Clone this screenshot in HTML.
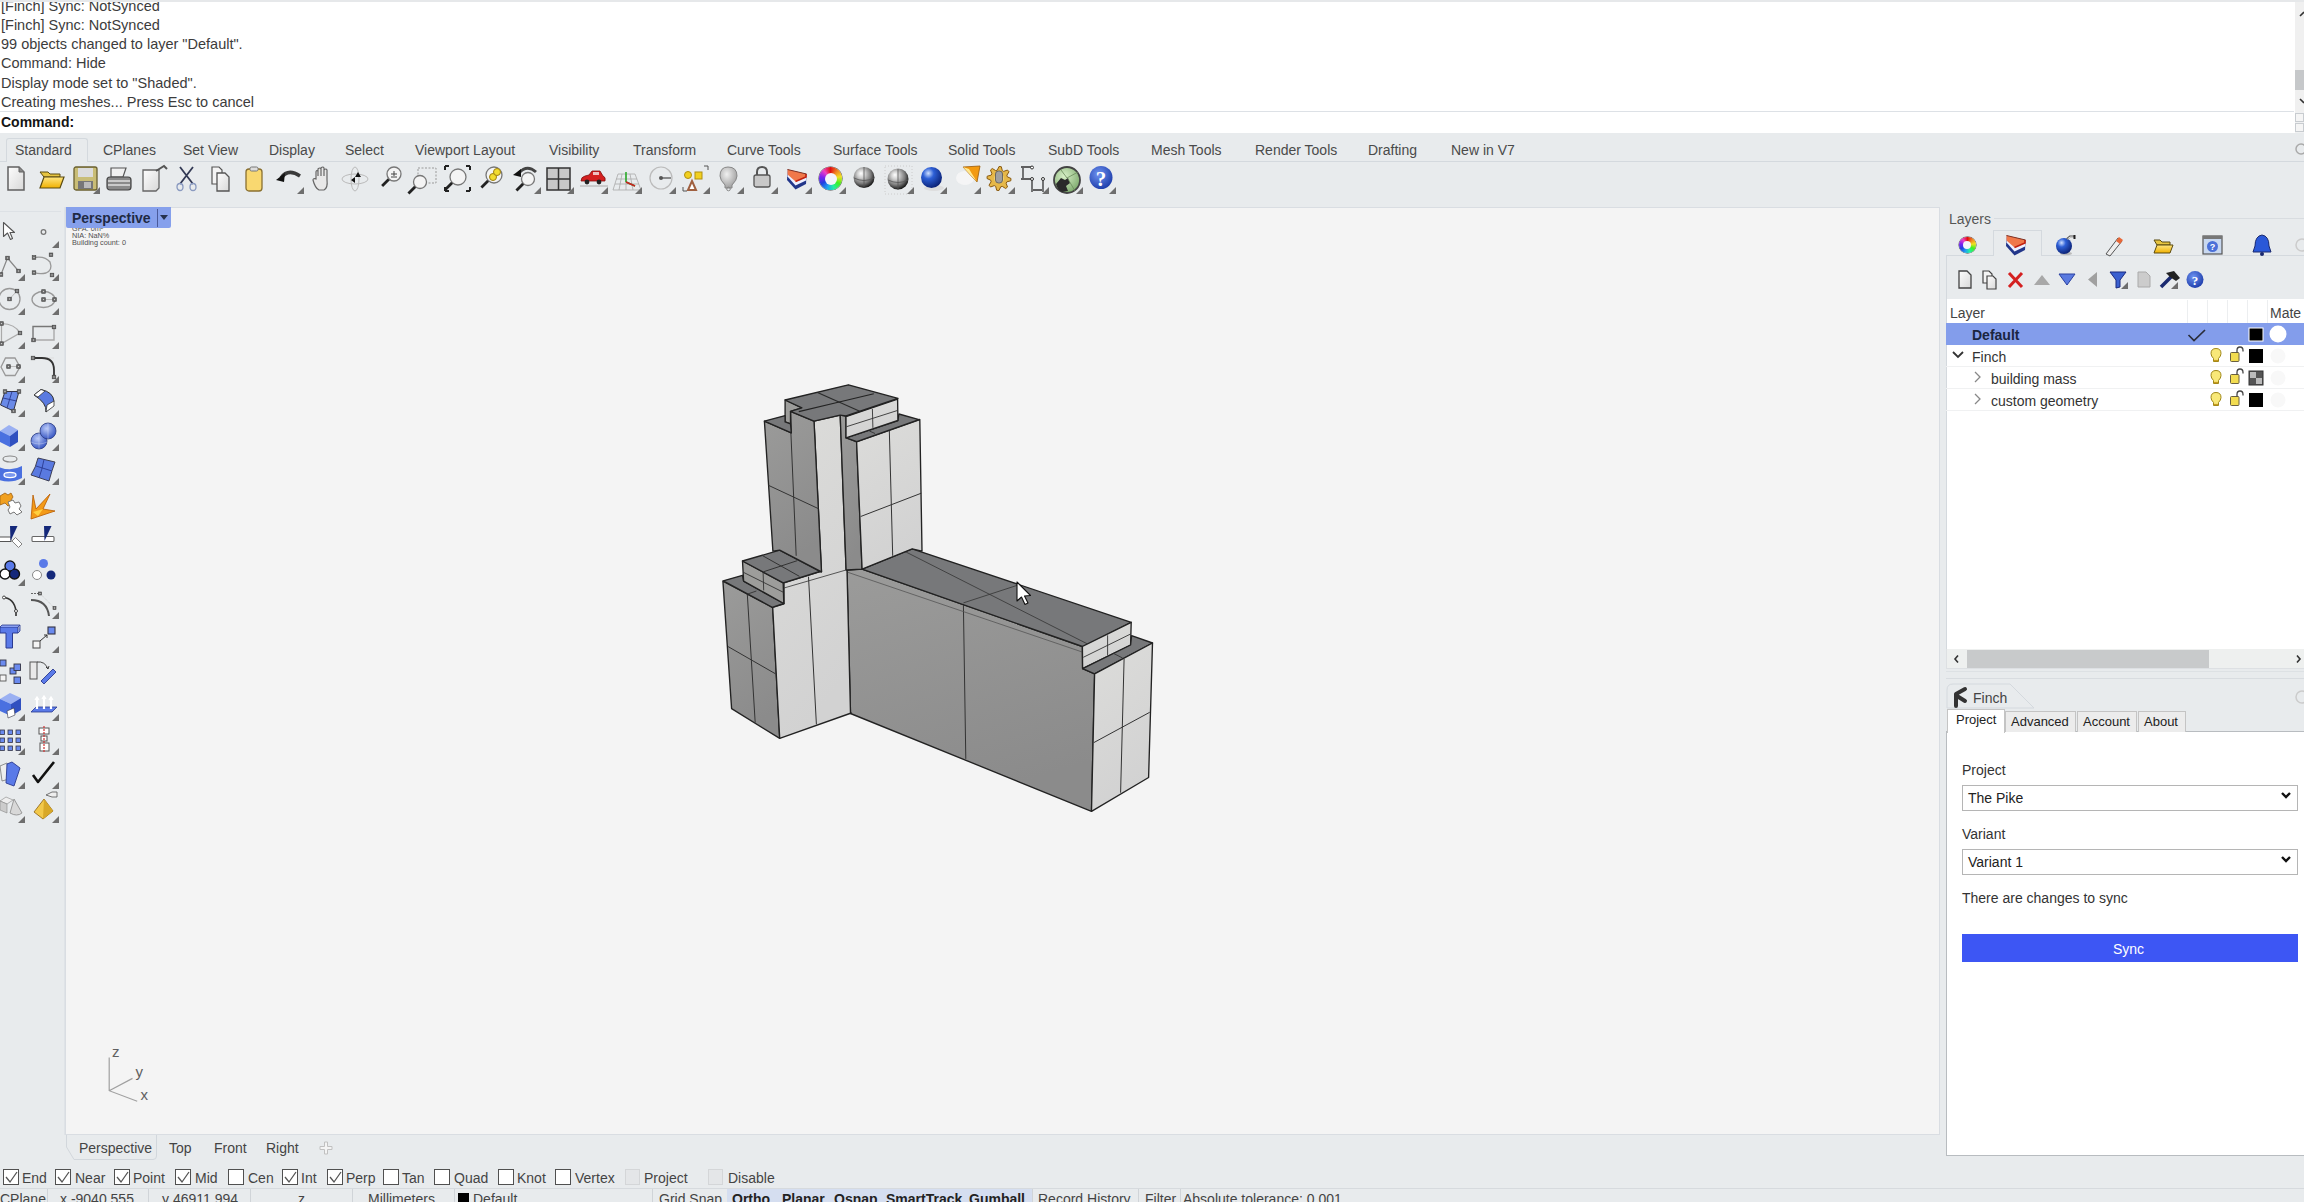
<!DOCTYPE html>
<html><head><meta charset="utf-8"><style>*{margin:0;padding:0;box-sizing:border-box}
html,body{width:2304px;height:1202px;overflow:hidden;background:#e8ebed;font-family:"Liberation Sans",sans-serif;position:relative}
.a{position:absolute}
.t{position:absolute;white-space:nowrap;line-height:16px}
svg{position:absolute;left:0;top:0}</style></head><body>
<div class="a" style="left:0;top:0;width:2304px;height:133px;background:#fff"></div>
<div class="a" style="left:0;top:0;width:2304px;height:2px;background:#e4e6e8"></div>
<div class="a" style="left:0;top:111px;width:2294px;height:1px;background:#dde1e6"></div>
<div class="a" style="left:2295px;top:2px;width:9px;height:110px;background:#f0f0f0"></div>
<div class="a" style="left:2295px;top:70px;width:9px;height:20px;background:#c6c8ca"></div>
<div class="a" style="left:2295px;top:112px;width:9px;height:21px;background:#f0f1f2"></div>
<div class="a" style="left:2295px;top:113px;width:9px;height:9px;border:1px solid #c8ccd0;background:#f5f5f5"></div>
<div class="a" style="left:2295px;top:123px;width:9px;height:9px;border:1px solid #c8ccd0;background:#f5f5f5"></div>
<div class="t" style="left:1px;top:-2px;font-size:14.5px;color:#3c3c3c;font-weight:normal;">[Finch] Sync: NotSynced</div>
<div class="t" style="left:1px;top:17px;font-size:14.5px;color:#3c3c3c;font-weight:normal;">[Finch] Sync: NotSynced</div>
<div class="t" style="left:1px;top:36px;font-size:14.5px;color:#3c3c3c;font-weight:normal;">99 objects changed to layer &quot;Default&quot;.</div>
<div class="t" style="left:1px;top:55px;font-size:14.5px;color:#3c3c3c;font-weight:normal;">Command: Hide</div>
<div class="t" style="left:1px;top:75px;font-size:14.5px;color:#3c3c3c;font-weight:normal;">Display mode set to &quot;Shaded&quot;.</div>
<div class="t" style="left:1px;top:94px;font-size:14.5px;color:#3c3c3c;font-weight:normal;">Creating meshes... Press Esc to cancel</div>
<div class="t" style="left:1px;top:114px;font-size:14px;color:#141414;font-weight:bold;">Command:</div>
<div class="a" style="left:0;top:0;width:2304px;height:2px;background:#e6e8ea"></div>
<div class="a" style="left:0;top:161px;width:2304px;height:1px;background:#d4d9de"></div>
<div class="a" style="left:6px;top:138px;width:82px;height:24px;background:#e8ebed;border:1px solid #d4d9de;border-bottom:none;border-radius:3px 3px 0 0"></div>
<div class="t" style="left:15px;top:142px;font-size:14px;color:#4a4a4a;font-weight:normal;">Standard</div>
<div class="t" style="left:103px;top:142px;font-size:14px;color:#4a4a4a;font-weight:normal;">CPlanes</div>
<div class="t" style="left:183px;top:142px;font-size:14px;color:#4a4a4a;font-weight:normal;">Set View</div>
<div class="t" style="left:269px;top:142px;font-size:14px;color:#4a4a4a;font-weight:normal;">Display</div>
<div class="t" style="left:345px;top:142px;font-size:14px;color:#4a4a4a;font-weight:normal;">Select</div>
<div class="t" style="left:415px;top:142px;font-size:14px;color:#4a4a4a;font-weight:normal;">Viewport Layout</div>
<div class="t" style="left:549px;top:142px;font-size:14px;color:#4a4a4a;font-weight:normal;">Visibility</div>
<div class="t" style="left:633px;top:142px;font-size:14px;color:#4a4a4a;font-weight:normal;">Transform</div>
<div class="t" style="left:727px;top:142px;font-size:14px;color:#4a4a4a;font-weight:normal;">Curve Tools</div>
<div class="t" style="left:833px;top:142px;font-size:14px;color:#4a4a4a;font-weight:normal;">Surface Tools</div>
<div class="t" style="left:948px;top:142px;font-size:14px;color:#4a4a4a;font-weight:normal;">Solid Tools</div>
<div class="t" style="left:1048px;top:142px;font-size:14px;color:#4a4a4a;font-weight:normal;">SubD Tools</div>
<div class="t" style="left:1151px;top:142px;font-size:14px;color:#4a4a4a;font-weight:normal;">Mesh Tools</div>
<div class="t" style="left:1255px;top:142px;font-size:14px;color:#4a4a4a;font-weight:normal;">Render Tools</div>
<div class="t" style="left:1368px;top:142px;font-size:14px;color:#4a4a4a;font-weight:normal;">Drafting</div>
<div class="t" style="left:1451px;top:142px;font-size:14px;color:#4a4a4a;font-weight:normal;">New in V7</div>
<div class="a" style="left:65px;top:207px;width:1875px;height:928px;background:#f4f4f4;border:1px solid #d9dde2"></div>
<div class="t" style="left:72px;top:224.5px;font-size:7.3px;line-height:8px;color:#505050">GFA: 0m²</div>
<div class="t" style="left:72px;top:231.5px;font-size:7.3px;line-height:8px;color:#505050">NIA: NaN%</div>
<div class="t" style="left:72px;top:238.5px;font-size:7.3px;line-height:8px;color:#505050">Building count: 0</div>
<div class="a" style="left:66px;top:207px;width:105px;height:21px;background:#86a0ec;border-radius:0 0 2px 2px"></div>
<div class="a" style="left:157px;top:209px;width:1px;height:18px;background:#4a5a9a"></div>
<div class="t" style="left:72px;top:210px;font-size:14px;color:#1f2a44;font-weight:bold;">Perspective</div>
<svg width="2304" height="1202" viewBox="0 0 2304 1202"><path d="M66.5 1135 V1147 L74 1159.5 H153 Q156.5 1159.5 156.5 1156 V1135" fill="#e8ebed" stroke="#d2d7dc" stroke-width="1"/></svg>
<div class="t" style="left:79px;top:1140px;font-size:14px;color:#444;font-weight:normal;">Perspective</div>
<div class="t" style="left:169px;top:1140px;font-size:14px;color:#444;font-weight:normal;">Top</div>
<div class="t" style="left:214px;top:1140px;font-size:14px;color:#444;font-weight:normal;">Front</div>
<div class="t" style="left:266px;top:1140px;font-size:14px;color:#444;font-weight:normal;">Right</div>
<div class="a" style="left:3px;top:1169px;width:16px;height:16px;border:1.5px solid #505050;background:#fff"></div>
<div class="t" style="left:22px;top:1170px;font-size:14px;color:#444;font-weight:normal;">End</div>
<div class="a" style="left:55px;top:1169px;width:16px;height:16px;border:1.5px solid #505050;background:#fff"></div>
<div class="t" style="left:75px;top:1170px;font-size:14px;color:#444;font-weight:normal;">Near</div>
<div class="a" style="left:114px;top:1169px;width:16px;height:16px;border:1.5px solid #505050;background:#fff"></div>
<div class="t" style="left:133px;top:1170px;font-size:14px;color:#444;font-weight:normal;">Point</div>
<div class="a" style="left:175px;top:1169px;width:16px;height:16px;border:1.5px solid #505050;background:#fff"></div>
<div class="t" style="left:195px;top:1170px;font-size:14px;color:#444;font-weight:normal;">Mid</div>
<div class="a" style="left:228px;top:1169px;width:16px;height:16px;border:1.5px solid #505050;background:#fff"></div>
<div class="t" style="left:248px;top:1170px;font-size:14px;color:#444;font-weight:normal;">Cen</div>
<div class="a" style="left:282px;top:1169px;width:16px;height:16px;border:1.5px solid #505050;background:#fff"></div>
<div class="t" style="left:301px;top:1170px;font-size:14px;color:#444;font-weight:normal;">Int</div>
<div class="a" style="left:327px;top:1169px;width:16px;height:16px;border:1.5px solid #505050;background:#fff"></div>
<div class="t" style="left:346px;top:1170px;font-size:14px;color:#444;font-weight:normal;">Perp</div>
<div class="a" style="left:383px;top:1169px;width:16px;height:16px;border:1.5px solid #505050;background:#fff"></div>
<div class="t" style="left:402px;top:1170px;font-size:14px;color:#444;font-weight:normal;">Tan</div>
<div class="a" style="left:434px;top:1169px;width:16px;height:16px;border:1.5px solid #505050;background:#fff"></div>
<div class="t" style="left:454px;top:1170px;font-size:14px;color:#444;font-weight:normal;">Quad</div>
<div class="a" style="left:498px;top:1169px;width:16px;height:16px;border:1.5px solid #505050;background:#fff"></div>
<div class="t" style="left:517px;top:1170px;font-size:14px;color:#444;font-weight:normal;">Knot</div>
<div class="a" style="left:555px;top:1169px;width:16px;height:16px;border:1.5px solid #505050;background:#fff"></div>
<div class="t" style="left:575px;top:1170px;font-size:14px;color:#444;font-weight:normal;">Vertex</div>
<div class="a" style="left:625px;top:1169px;width:15px;height:16px;border:1px solid #d4d6d8;background:#e4e6e8"></div>
<div class="t" style="left:644px;top:1170px;font-size:14px;color:#444;font-weight:normal;">Project</div>
<div class="a" style="left:708px;top:1169px;width:15px;height:16px;border:1px solid #d4d6d8;background:#e4e6e8"></div>
<div class="t" style="left:728px;top:1170px;font-size:14px;color:#444;font-weight:normal;">Disable</div>
<div class="a" style="left:0;top:1188px;width:2304px;height:1px;background:#d6dade"></div>
<div class="a" style="left:47px;top:1189px;width:1px;height:13px;background:#d0d4d8"></div>
<div class="a" style="left:148px;top:1189px;width:1px;height:13px;background:#d0d4d8"></div>
<div class="a" style="left:250px;top:1189px;width:1px;height:13px;background:#d0d4d8"></div>
<div class="a" style="left:352px;top:1189px;width:1px;height:13px;background:#d0d4d8"></div>
<div class="a" style="left:454px;top:1189px;width:1px;height:13px;background:#d0d4d8"></div>
<div class="a" style="left:652px;top:1189px;width:1px;height:13px;background:#d0d4d8"></div>
<div class="a" style="left:1032px;top:1189px;width:1px;height:13px;background:#d0d4d8"></div>
<div class="a" style="left:1138px;top:1189px;width:1px;height:13px;background:#d0d4d8"></div>
<div class="a" style="left:1180px;top:1189px;width:1px;height:13px;background:#d0d4d8"></div>
<div class="a" style="left:727px;top:1189px;width:305px;height:13px;background:#d5def0"></div>
<div class="a" style="left:458px;top:1193px;width:11px;height:11px;background:#000"></div>
<div class="t" style="left:0px;top:1191px;font-size:14px;color:#444;font-weight:normal;">CPlane</div>
<div class="t" style="left:60px;top:1191px;font-size:14px;color:#444;font-weight:normal;">x -9040.555</div>
<div class="t" style="left:162px;top:1191px;font-size:14px;color:#444;font-weight:normal;">y 46911.994</div>
<div class="t" style="left:298px;top:1191px;font-size:14px;color:#444;font-weight:normal;">z</div>
<div class="t" style="left:368px;top:1191px;font-size:14px;color:#444;font-weight:normal;">Millimeters</div>
<div class="t" style="left:473px;top:1191px;font-size:14px;color:#444;font-weight:normal;">Default</div>
<div class="t" style="left:659px;top:1191px;font-size:14px;color:#444;font-weight:normal;">Grid Snap</div>
<div class="t" style="left:732px;top:1191px;font-size:14px;color:#222;font-weight:bold;">Ortho</div>
<div class="t" style="left:782px;top:1191px;font-size:14px;color:#222;font-weight:bold;">Planar</div>
<div class="t" style="left:834px;top:1191px;font-size:14px;color:#222;font-weight:bold;">Osnap</div>
<div class="t" style="left:886px;top:1191px;font-size:14px;color:#222;font-weight:bold;">SmartTrack</div>
<div class="t" style="left:969px;top:1191px;font-size:14px;color:#222;font-weight:bold;">Gumball</div>
<div class="t" style="left:1038px;top:1191px;font-size:14px;color:#444;font-weight:normal;">Record History</div>
<div class="t" style="left:1145px;top:1191px;font-size:14px;color:#444;font-weight:normal;">Filter</div>
<div class="t" style="left:1183px;top:1191px;font-size:14px;color:#444;font-weight:normal;">Absolute tolerance: 0.001</div>
<div class="a" style="left:1941px;top:207px;width:5px;height:950px;background:#e8ebed"></div>
<div class="t" style="left:1949px;top:211px;font-size:14px;color:#555;font-weight:normal;">Layers</div>
<div class="a" style="left:1994px;top:218px;width:310px;height:1px;background:#d8dce0"></div>
<div class="a" style="left:1946px;top:255px;width:358px;height:1px;background:#d4d9de"></div>
<div class="a" style="left:1993px;top:230px;width:49px;height:26px;background:#e8ebed;border:1px solid #d4d9de;border-bottom:none"></div>
<div class="a" style="left:1946px;top:256px;width:358px;height:43px;background:#e8ebed;border-left:1px solid #d4d9de"></div>
<div class="a" style="left:1946px;top:299px;width:358px;height:350px;background:#fff;border-left:1px solid #d4d9de"></div>
<div class="a" style="left:2187px;top:300px;width:1px;height:23px;background:#eceef0"></div>
<div class="a" style="left:2207px;top:300px;width:1px;height:23px;background:#eceef0"></div>
<div class="a" style="left:2227px;top:300px;width:1px;height:23px;background:#eceef0"></div>
<div class="a" style="left:2247px;top:300px;width:1px;height:23px;background:#eceef0"></div>
<div class="a" style="left:2267px;top:300px;width:1px;height:23px;background:#eceef0"></div>
<div class="t" style="left:1950px;top:305px;font-size:14px;color:#444;font-weight:normal;">Layer</div>
<div class="t" style="left:2270px;top:305px;font-size:14px;color:#444;font-weight:normal;">Mate</div>
<div class="a" style="left:1946px;top:323px;width:358px;height:22px;background:#839deb"></div>
<div class="t" style="left:1972px;top:327px;font-size:14px;color:#1b2540;font-weight:bold;">Default</div>
<div class="a" style="left:1946px;top:366px;width:358px;height:1px;background:#f0f1f2"></div>
<div class="a" style="left:1946px;top:388px;width:358px;height:1px;background:#f0f1f2"></div>
<div class="a" style="left:1946px;top:410px;width:358px;height:1px;background:#f0f1f2"></div>
<div class="t" style="left:1972px;top:349px;font-size:14px;color:#333;font-weight:normal;">Finch</div>
<div class="t" style="left:1991px;top:371px;font-size:14px;color:#333;font-weight:normal;">building mass</div>
<div class="t" style="left:1991px;top:393px;font-size:14px;color:#333;font-weight:normal;">custom geometry</div>
<div class="a" style="left:1946px;top:649px;width:358px;height:20px;background:#eef0ef;border-left:1px solid #dde0e3;border-bottom:1px solid #dde0e3"></div>
<div class="a" style="left:1967px;top:649.5px;width:242px;height:18.5px;background:#c8cacb"></div>
<div class="a" style="left:1946px;top:671px;width:358px;height:1px;background:#dde1e4"></div>
<div class="a" style="left:1946px;top:678px;width:358px;height:1px;background:#d8dce0"></div>
<svg width="2304" height="1202" viewBox="0 0 2304 1202"><path d="M1947 708 L1947 690 Q1947 684 1953 684 L2010 684 L2034 708 Z" fill="#e8ebed" stroke="#d4d9de" stroke-width="1"/></svg>
<div class="t" style="left:1973px;top:690px;font-size:14px;color:#444;font-weight:normal;">Finch</div>
<div class="a" style="left:1946px;top:732px;width:358px;height:424px;background:#fff;border:1px solid #b8bcc0;border-right:none;border-top:none"></div>
<div class="a" style="left:1946px;top:731px;width:358px;height:1px;background:#b8bcc0"></div>
<div class="a" style="left:1947px;top:709px;width:58px;height:24px;background:#fff;border:1px solid #c4c4c4;border-bottom:none"></div>
<div class="a" style="left:2005px;top:711px;width:71px;height:21px;background:#ececec;border:1px solid #c4c4c4;border-bottom:none"></div>
<div class="t" style="left:2011px;top:714px;font-size:13px;color:#222;font-weight:normal;">Advanced</div>
<div class="a" style="left:2077px;top:711px;width:60px;height:21px;background:#ececec;border:1px solid #c4c4c4;border-bottom:none"></div>
<div class="t" style="left:2083px;top:714px;font-size:13px;color:#222;font-weight:normal;">Account</div>
<div class="a" style="left:2138px;top:711px;width:48px;height:21px;background:#ececec;border:1px solid #c4c4c4;border-bottom:none"></div>
<div class="t" style="left:2144px;top:714px;font-size:13px;color:#222;font-weight:normal;">About</div>
<div class="t" style="left:1956px;top:712px;font-size:13px;color:#222;font-weight:normal;">Project</div>
<div class="t" style="left:1962px;top:762px;font-size:14px;color:#333;font-weight:normal;">Project</div>
<div class="a" style="left:1962px;top:785px;width:336px;height:26px;border:1px solid #b5b5b5;background:#fff"></div>
<div class="t" style="left:1968px;top:790px;font-size:14px;color:#222;font-weight:normal;">The Pike</div>
<div class="t" style="left:1962px;top:826px;font-size:14px;color:#333;font-weight:normal;">Variant</div>
<div class="a" style="left:1962px;top:849px;width:336px;height:26px;border:1px solid #b5b5b5;background:#fff"></div>
<div class="t" style="left:1968px;top:854px;font-size:14px;color:#222;font-weight:normal;">Variant 1</div>
<div class="t" style="left:1962px;top:890px;font-size:14px;color:#333;font-weight:normal;">There are changes to sync</div>
<div class="a" style="left:1962px;top:934px;width:336px;height:28px;background:#3d56f4"></div>
<div class="t" style="left:2113px;top:941px;font-size:14px;color:#fff;font-weight:normal;">Sync</div>
<div class="a" style="left:64px;top:207px;width:1px;height:928px;background:#dfe3e7"></div>
<div class="a" style="left:0;top:211px;width:61px;height:1px;background:#dde1e5"></div>
<div class="a" style="left:1941px;top:1157px;width:363px;height:1px;background:#e8ebed"></div>
<div class="a" style="left:819px;top:167px;width:23px;height:23px;border-radius:50%;background:conic-gradient(#e01010,#f08020,#f0e020,#40f020,#20f0a0,#20a0f0,#2040e0,#8020f0,#f040c0,#e01010);box-shadow:0 0 0 0.5px #444"></div>
<div class="a" style="left:824.5px;top:172.5px;width:12px;height:12px;border-radius:50%;background:#f4f4fa"></div>
<div class="t" style="left:112px;top:1044px;font-size:15px;color:#606060">z</div>
<div class="t" style="left:135.5px;top:1064px;font-size:15px;color:#606060">y</div>
<div class="t" style="left:140.5px;top:1087px;font-size:15px;color:#606060">x</div>
<div class="a" style="left:1959px;top:236.5px;width:16.6px;height:16.6px;border-radius:50%;background:conic-gradient(#e01010,#f08020,#f0e020,#40f020,#20f0a0,#20a0f0,#2040e0,#8020f0,#f040c0,#e01010);box-shadow:0 0 0 0.5px #444"></div>
<div class="a" style="left:1963.3px;top:240.8px;width:8px;height:8px;border-radius:50%;background:#f4f4fa"></div>
<svg width="2304" height="1202" viewBox="0 0 2304 1202">
<path d="M2300 16 L2304 12 M2300 99 L2304 103" fill="none" stroke="#333" stroke-width="1.6"/>
<circle cx="2301" cy="149" r="5" fill="none" stroke="#aaa" stroke-width="1.5"/>
<path d="M160 215 L168 215 L164 220 Z" fill="#26324f"/>
<path d="M324.5 1142 H327.5 V1146.5 H332 V1149.5 H327.5 V1154 H324.5 V1149.5 H320 V1146.5 H324.5 Z" fill="#f4f4f4" stroke="#c0c0c0" stroke-width="1"/>
<path d="M6 1177 L10 1182 L17 1172" fill="none" stroke="#555" stroke-width="1.3"/>
<path d="M58 1177 L62 1182 L69 1172" fill="none" stroke="#555" stroke-width="1.3"/>
<path d="M117 1177 L121 1182 L128 1172" fill="none" stroke="#555" stroke-width="1.3"/>
<path d="M178 1177 L182 1182 L189 1172" fill="none" stroke="#555" stroke-width="1.3"/>
<path d="M285 1177 L289 1182 L296 1172" fill="none" stroke="#555" stroke-width="1.3"/>
<path d="M330 1177 L334 1182 L341 1172" fill="none" stroke="#555" stroke-width="1.3"/>
<path d="M1958 655.5 L1955 659 L1958 662.5 M2297 655.5 L2300 659 L2297 662.5" fill="none" stroke="#333" stroke-width="1.6"/>
<path d="M2282 793 L2286 797 L2290 793" fill="none" stroke="#111" stroke-width="2.4"/>
<path d="M2282 857 L2286 861 L2290 857" fill="none" stroke="#111" stroke-width="2.4"/>
<defs>
<linearGradient id="gpaper" x1="0" y1="0" x2="1" y2="1"><stop offset="0" stop-color="#fdfdfd"/><stop offset="1" stop-color="#d8d8d8"/></linearGradient>
<linearGradient id="gyel" x1="0" y1="0" x2="0" y2="1"><stop offset="0" stop-color="#ffe680"/><stop offset="1" stop-color="#f0b000"/></linearGradient>
<radialGradient id="gsph" cx="0.42" cy="0.38" r="0.62" fx="0.35" fy="0.3"><stop offset="0" stop-color="#ffffff"/><stop offset="0.3" stop-color="#d0d0d0"/><stop offset="0.7" stop-color="#7a7a7a"/><stop offset="1" stop-color="#1a1a1a"/></radialGradient>
<radialGradient id="gblue" cx="0.35" cy="0.3" r="0.75"><stop offset="0" stop-color="#cfe0ff"/><stop offset="0.35" stop-color="#2d5fd6"/><stop offset="1" stop-color="#0a1f70"/></radialGradient>
<radialGradient id="ghelp" cx="0.4" cy="0.35" r="0.7"><stop offset="0" stop-color="#6f94f2"/><stop offset="1" stop-color="#1b3aa8"/></radialGradient>
<radialGradient id="gglobe" cx="0.4" cy="0.35" r="0.7"><stop offset="0" stop-color="#d8f0c8"/><stop offset="1" stop-color="#7aa86a"/></radialGradient>
<radialGradient id="gbulb" cx="0.4" cy="0.35" r="0.7"><stop offset="0" stop-color="#f0f0f0"/><stop offset="1" stop-color="#9a9a9a"/></radialGradient>
<linearGradient id="gblu2" x1="0" y1="0" x2="1" y2="1"><stop offset="0" stop-color="#a8bdf5"/><stop offset="1" stop-color="#3a5ccc"/></linearGradient>
<linearGradient id="gface" x1="0" y1="0" x2="0.3" y2="1"><stop offset="0" stop-color="#9b9b9a"/><stop offset="1" stop-color="#8b8b8b"/></linearGradient>
<linearGradient id="glight" x1="0" y1="0" x2="0.3" y2="1"><stop offset="0" stop-color="#dcdcda"/><stop offset="1" stop-color="#d2d2d2"/></linearGradient>
</defs>
<g transform="translate(7,166)"><path d="M1 1 H12 L17 6 V24 H1 Z" fill="url(#gpaper)" stroke="#606060" stroke-width="1.5"/><path d="M12 1 V6 H17" fill="#888" stroke="#606060"/></g>
<g transform="translate(39,166)"><path d="M1 6 H9 L11 8 H21 V11 H5 Z" fill="#e6c440" stroke="#5a4a10" stroke-width="1"/><path d="M1 22 L5 11 H25 L21 22 Z" fill="url(#gyel)" stroke="#5a4a10" stroke-width="1.2"/></g>
<g transform="translate(73,166)"><rect x="1" y="1" width="23" height="23" rx="2" fill="#c9bd76" stroke="#6a6030" stroke-width="1.3"/><rect x="5" y="2" width="15" height="9" fill="#dcdcdc"/><rect x="5" y="15" width="15" height="8" fill="#777" /><rect x="11" y="16" width="7" height="6" fill="#bbb"/></g>
<path d="M100 194 L100 187 L93 194 Z" fill="#6e6e6e"/>
<g transform="translate(106,166)"><path d="M5 2 H20 L17 11 H5 Z" fill="#f0f0f0" stroke="#555" stroke-width="1.2"/><rect x="1" y="11" width="24" height="13" rx="3" fill="#8a8a8a" stroke="#444" stroke-width="1.2"/><path d="M2 15 H24 M2 19 H24" stroke="#e0e0e0" stroke-width="1.5"/></g>
<g transform="translate(142,166)"><path d="M1 4 H17 V22 L14 25 H1 Z" fill="url(#gpaper)" stroke="#666" stroke-width="1.3"/><path d="M14 5 L22 0 L25 3" fill="none" stroke="#555" stroke-width="2"/></g>
<g transform="translate(177,166)"><path d="M3 1 L16 18 M16 1 L3 18" stroke="#333a55" stroke-width="1.8"/><ellipse cx="3" cy="21" rx="3" ry="3.5" fill="none" stroke="#8a9ac0" stroke-width="1.3"/><ellipse cx="16" cy="21" rx="3" ry="3.5" fill="none" stroke="#8a9ac0" stroke-width="1.3"/></g>
<g transform="translate(211,166)"><path d="M1 1 H8 L11 4 V18 H1 Z" fill="#f4f4f4" stroke="#555" stroke-width="1.2"/><path d="M6 7 H14 L18 11 V25 H6 Z" fill="url(#gpaper)" stroke="#555" stroke-width="1.3"/></g>
<g transform="translate(245,166)"><rect x="1" y="3" width="16" height="22" rx="3" fill="#f9d870" stroke="#8a7030" stroke-width="1.3"/><rect x="5" y="1" width="8" height="4" rx="1.5" fill="#ddd" stroke="#777"/></g>
<g transform="translate(276,166)"><path d="M5 12 Q12 2 24 10" fill="none" stroke="#3a3a3a" stroke-width="3.5"/><path d="M0 14 L9 7 L8 16 Z" fill="#111"/></g>
<path d="M304 194 L304 187 L297 194 Z" fill="#6e6e6e"/>
<g transform="translate(312,166)"><path d="M4 12 V6 Q4 4 6 5 V10 V3 Q8 1 9 3 V10 V2 Q11 0 12 2 V10 V4 Q14 2 15 4 V14 Q16 22 12 24 H7 Q3 22 1 14 Q1 12 4 13 Z" fill="#e8e8e8" stroke="#666" stroke-width="1.2"/></g>
<g transform="translate(342,166)"><ellipse cx="13" cy="13" rx="13" ry="5" fill="none" stroke="#bbb" stroke-width="1"/><ellipse cx="13" cy="13" rx="4" ry="12" fill="none" stroke="#bbb" stroke-width="1"/><path d="M16 6 L19 11 H13 Z M9 14 L13 11 V17 Z" fill="#111"/></g>
<g transform="translate(379,166)"><line x1="10.100000000000001" y1="12.899999999999999" x2="3.1000000000000014" y2="19.9" stroke="#222" stroke-width="2.8"/><circle cx="15" cy="8" r="7" fill="#f4f4f4" stroke="#777" stroke-width="1.3"/><path d="M12 8 H18 M15 5 V10 M12 11 H18" stroke="#444" stroke-width="1"/></g>
<g transform="translate(410,166)"><rect x="8" y="2" width="18" height="15" fill="none" stroke="#999" stroke-dasharray="2 1.5"/><line x1="5.45" y1="20.55" x2="-1.5499999999999998" y2="27.55" stroke="#222" stroke-width="2.8"/><circle cx="10" cy="16" r="6.5" fill="#f4f4f4" stroke="#777" stroke-width="1.3"/></g>
<g transform="translate(445,166)"><line x1="7.4" y1="16.6" x2="0.40000000000000036" y2="23.6" stroke="#222" stroke-width="2.8"/><circle cx="13" cy="11" r="8" fill="#f4f4f4" stroke="#777" stroke-width="1.3"/><path d="M0 0 h4 M0 0 v4 M25 0 h-4 M25 0 v4 M0 25 h4 M0 25 v-4 M25 25 h-4 M25 25 v-4" stroke="#222" stroke-width="2"/></g>
<g transform="translate(480,166)"><line x1="8.4" y1="14.6" x2="1.4000000000000004" y2="21.6" stroke="#222" stroke-width="2.8"/><circle cx="14" cy="9" r="8" fill="#f4f4f4" stroke="#777" stroke-width="1.3"/><circle cx="13" cy="11" r="3.5" fill="#f2dc30" stroke="#a08010"/><circle cx="17" cy="6" r="3.5" fill="#f2dc30" stroke="#a08010"/></g>
<g transform="translate(513,166)"><line x1="10.45" y1="17.55" x2="3.4499999999999993" y2="24.55" stroke="#222" stroke-width="2.8"/><circle cx="15" cy="13" r="6.5" fill="#f4f4f4" stroke="#777" stroke-width="1.3"/><path d="M6 7 Q14 -2 23 6" fill="none" stroke="#444" stroke-width="3"/><path d="M0 9 L8 3 L8 11 Z" fill="#111"/></g>
<path d="M541 194 L541 187 L534 194 Z" fill="#6e6e6e"/>
<g transform="translate(546,166)"><rect x="1" y="2" width="23" height="22" fill="#c8c8c8" stroke="#333" stroke-width="1.5"/><path d="M12.5 2 V24 M1 13 H24" stroke="#333" stroke-width="1.5"/></g>
<path d="M574 194 L574 187 L567 194 Z" fill="#6e6e6e"/>
<g transform="translate(580,166)"><path d="M1 15 Q1 11 5 10 L9 9 L12 5 H20 L23 10 Q26 11 25 15 Z" fill="#d42020" stroke="#801010" stroke-width="0.8"/><rect x="13" y="6" width="6" height="3" fill="#f0c0c0"/><circle cx="7" cy="16" r="2.4" fill="#222"/><circle cx="19" cy="16" r="2.4" fill="#222"/><path d="M0 20 H28" stroke="#aaa"/></g>
<path d="M608 194 L608 187 L601 194 Z" fill="#6e6e6e"/>
<g transform="translate(613,166)"><path d="M5 8 L22 8 L28 24 L0 24 Z M9 8 L6 24 M13 8 L13 24 M17 8 L20 24 M3 13 H24 M2 18 H26" fill="none" stroke="#aaa" stroke-width="0.8"/><path d="M13 16 V6 M13 16 L22 20" stroke="#2a2" stroke-width="1.5"/><path d="M13 16 L22 20" stroke="#c22" stroke-width="1.5"/></g>
<path d="M642 194 L642 187 L635 194 Z" fill="#6e6e6e"/>
<g transform="translate(649,166)"><circle cx="12" cy="12" r="11" fill="none" stroke="#bbb" stroke-width="1.2"/><circle cx="12" cy="12" r="2" fill="#555"/><path d="M12 12 H22" stroke="#555" stroke-width="1.3"/></g>
<path d="M676 194 L676 187 L669 194 Z" fill="#6e6e6e"/>
<g transform="translate(683,166)"><circle cx="5" cy="9" r="3.5" fill="#f2d020" stroke="#b09010"/><rect x="12" y="6" width="7" height="7" fill="#f2d020" stroke="#b09010"/><path d="M9 15 L13 24 L5 24 Z" fill="#fff" stroke="#a06040" stroke-width="2"/><path d="M21 0 h4 v4 M0 21 v4 h4" fill="none" stroke="#555"/></g>
<path d="M710 194 L710 187 L703 194 Z" fill="#6e6e6e"/>
<g transform="translate(719,166)"><path d="M9 1 Q18 1 18 10 Q18 14 13 19 V22 H6 V19 Q1 14 1 10 Q1 1 9 1 Z" fill="url(#gbulb)" stroke="#888" stroke-width="1"/><circle cx="9.5" cy="23" r="1.8" fill="none" stroke="#888"/></g>
<path d="M744 194 L744 187 L737 194 Z" fill="#6e6e6e"/>
<g transform="translate(753,166)"><path d="M4 9 V6 Q4 1 9 1 Q14 1 14 6 V9" fill="none" stroke="#555" stroke-width="2"/><rect x="1" y="9" width="16" height="12" rx="2" fill="#c8c8c8" stroke="#555" stroke-width="1.3"/></g>
<path d="M778 194 L778 187 L771 194 Z" fill="#6e6e6e"/>
<g transform="translate(787,166)"><path d="M0.5 3.5 L19.5 8 L19 18 L8.5 23.5 L0 14 Z" fill="#22368a"/><path d="M0.5 3.5 L19.5 8 L19 14.5 L8.5 19.5 L0.5 10.5 Z" fill="#eef0ff"/><path d="M0.5 3.5 L19.5 8 L19 11 L8.5 15.5 L0.5 8.5 Z" fill="#f0784a"/><path d="M8.5 15.5 L19 11 L19 8" fill="none" stroke="#c02010" stroke-width="1.6"/><path d="M0.5 3.5 L19.5 8" stroke="#803020" stroke-width="1"/></g>
<path d="M812 194 L812 187 L805 194 Z" fill="#6e6e6e"/>
<defs><linearGradient id="gcw" x1="0" y1="0" x2="1" y2="1"><stop offset="0" stop-color="#d020d0"/><stop offset="0.25" stop-color="#ff3020"/><stop offset="0.5" stop-color="#f0e020"/><stop offset="0.75" stop-color="#20e060"/><stop offset="1" stop-color="#2060ff"/></linearGradient></defs>
<path d="M846 194 L846 187 L839 194 Z" fill="#6e6e6e"/>
<g transform="translate(853,166)"><circle cx="11" cy="11.5" r="10.5" fill="url(#gsph)"/><path d="M11 1 V22 M1 12 Q11 17 21 12" fill="none" stroke="#555" stroke-width="0.8"/></g>
<g transform="translate(885,166)"><rect x="0" y="0" width="27" height="28" fill="none" stroke="#ccc" stroke-dasharray="1 2"/><circle cx="13" cy="13" r="10.5" fill="url(#gsph)"/><path d="M13 3 V24 M3 14 Q13 19 23 14" fill="none" stroke="#555" stroke-width="0.8"/></g>
<path d="M914 194 L914 187 L907 194 Z" fill="#6e6e6e"/>
<g transform="translate(920,166)"><ellipse cx="14" cy="22" rx="10" ry="3" fill="#ddd"/><circle cx="11.5" cy="11.5" r="10.5" fill="url(#gblue)"/></g>
<path d="M947 194 L947 187 L940 194 Z" fill="#6e6e6e"/>
<g transform="translate(955,166)"><ellipse cx="10" cy="12" rx="9" ry="7" fill="#f8f8f8" opacity="0.8"/><path d="M8 1 L25 0 L22 16 Z" fill="#f39a10" stroke="#9a5a08" stroke-width="0.8"/><path d="M8 1 L14 3 L22 16" fill="#ffe890"/></g>
<path d="M981 194 L981 187 L974 194 Z" fill="#6e6e6e"/>
<g transform="translate(986,166)"><path d="M25.0 12.5 L24.8 14.8 L20.9 15.8 L20.1 17.2 L21.5 21.0 L19.7 22.5 L16.3 20.4 L14.7 20.8 L13.0 24.5 L10.7 24.3 L9.7 20.4 L8.3 19.6 L4.5 21.0 L3.0 19.2 L5.1 15.8 L4.7 14.2 L1.0 12.5 L1.2 10.2 L5.1 9.2 L5.9 7.8 L4.5 4.0 L6.3 2.5 L9.7 4.6 L11.3 4.2 L13.0 0.5 L15.3 0.7 L16.3 4.6 L17.7 5.4 L21.5 4.0 L23.0 5.8 L20.9 9.2 L21.3 10.8 Z" fill="#e6b848" stroke="#8a5a10" stroke-width="1"/><circle cx="13" cy="12.5" r="5" fill="#f0d070"/><rect x="9.5" y="5" width="7" height="12" rx="3" fill="#a0a0a0" stroke="#555" stroke-width="0.8"/></g>
<path d="M1015 194 L1015 187 L1008 194 Z" fill="#6e6e6e"/>
<g transform="translate(1020,166)"><path d="M1 1 H12 M1 13 H12 M3 2 V12 M12 13 V26 M23 13 V26 M13 24 H22" fill="none" stroke="#333" stroke-width="1.3"/><circle cx="12" cy="1.5" r="1.5" fill="#fff" stroke="#333"/><circle cx="12" cy="13" r="1.5" fill="#fff" stroke="#333"/><circle cx="23" cy="13" r="1.5" fill="#fff" stroke="#333"/></g>
<path d="M1049 194 L1049 187 L1042 194 Z" fill="#6e6e6e"/>
<g transform="translate(1053,166)"><circle cx="14" cy="14" r="13" fill="url(#gglobe)" stroke="#444" stroke-width="1.8"/><path d="M3 18 L8 12 L12 14 L15 12 L17 17 L13 20 L15 25 L9 26 Q4 23 3 18 Z" fill="#2a2a2a"/><path d="M14 12 L25 6 M15 13 L22 25 M8 4 L14 12" stroke="#6a8a5a" stroke-width="0.8"/></g>
<path d="M1083 194 L1083 187 L1076 194 Z" fill="#6e6e6e"/>
<g transform="translate(1089,166)"><circle cx="12" cy="11.5" r="11.5" fill="url(#ghelp)"/><text x="12" y="19.5" font-family="Liberation Serif" font-weight="bold" font-size="21" fill="#fff" text-anchor="middle">?</text></g>
<path d="M1116 194 L1116 187 L1109 194 Z" fill="#6e6e6e"/>
<path d="M3.5 222.5 V236.5 L7.5 233 L10.5 239.5 L12.5 238.5 L10 232.5 L14.5 232.5 Z" fill="#fff" stroke="#555" stroke-width="1.1" stroke-linejoin="round"/>
<circle cx="43.5" cy="232" r="2.3" fill="none" stroke="#777" stroke-width="1.3"/>
<path d="M59 248 L59 241 L52 248 Z" fill="#6e6e6e"/>
<path d="M1 274.5 L7.5 258 L18.5 271" fill="none" stroke="#888" stroke-width="1.2"/><rect x="-0.8" y="272.7" width="3.6" height="3.6" fill="#666" stroke="#444" stroke-width="0.6"/><rect x="0.4" y="273.9" width="1.2" height="1.2" fill="#ccc"/><rect x="5.7" y="256.2" width="3.6" height="3.6" fill="#666" stroke="#444" stroke-width="0.6"/><rect x="6.9" y="257.4" width="1.2" height="1.2" fill="#ccc"/><rect x="16.7" y="269.2" width="3.6" height="3.6" fill="#666" stroke="#444" stroke-width="0.6"/><rect x="17.9" y="270.4" width="1.2" height="1.2" fill="#ccc"/>
<path d="M25 281 L25 274 L18 281 Z" fill="#6e6e6e"/>
<path d="M34 257.5 Q45 255.5 50 262 Q53 270 46 273 Q40 274.5 34 272.5" fill="none" stroke="#999" stroke-width="1.3"/><rect x="32.2" y="255.7" width="3.6" height="3.6" fill="#666" stroke="#444" stroke-width="0.6"/><rect x="33.4" y="256.9" width="1.2" height="1.2" fill="#ccc"/><rect x="49.2" y="253.0" width="3.6" height="3.6" fill="#666" stroke="#444" stroke-width="0.6"/><rect x="50.4" y="254.20000000000002" width="1.2" height="1.2" fill="#ccc"/><rect x="32.2" y="270.8" width="3.6" height="3.6" fill="#666" stroke="#444" stroke-width="0.6"/><rect x="33.4" y="272.0" width="1.2" height="1.2" fill="#ccc"/><rect x="50.2" y="273.2" width="3.6" height="3.6" fill="#666" stroke="#444" stroke-width="0.6"/><rect x="51.4" y="274.4" width="1.2" height="1.2" fill="#ccc"/>
<path d="M59 281 L59 274 L52 281 Z" fill="#6e6e6e"/>
<circle cx="9.5" cy="299" r="10.5" fill="none" stroke="#999" stroke-width="1.3"/><path d="M9.5 299 L17 291" stroke="#bbb"/><rect x="7.7" y="297.2" width="3.6" height="3.6" fill="#666" stroke="#444" stroke-width="0.6"/><rect x="8.9" y="298.4" width="1.2" height="1.2" fill="#ccc"/><rect x="15.2" y="289.2" width="3.6" height="3.6" fill="#666" stroke="#444" stroke-width="0.6"/><rect x="16.4" y="290.4" width="1.2" height="1.2" fill="#ccc"/>
<path d="M25 315 L25 308 L18 315 Z" fill="#6e6e6e"/>
<ellipse cx="43.5" cy="299.5" rx="11.5" ry="8" fill="none" stroke="#999" stroke-width="1.3"/><path d="M43.5 299.5 H54.5" stroke="#bbb"/><rect x="41.7" y="289.7" width="3.6" height="3.6" fill="#666" stroke="#444" stroke-width="0.6"/><rect x="42.9" y="290.9" width="1.2" height="1.2" fill="#ccc"/><rect x="41.7" y="297.7" width="3.6" height="3.6" fill="#666" stroke="#444" stroke-width="0.6"/><rect x="42.9" y="298.9" width="1.2" height="1.2" fill="#ccc"/><rect x="52.7" y="297.7" width="3.6" height="3.6" fill="#666" stroke="#444" stroke-width="0.6"/><rect x="53.9" y="298.9" width="1.2" height="1.2" fill="#ccc"/>
<path d="M59 315 L59 308 L52 315 Z" fill="#6e6e6e"/>
<path d="M1.5 323.5 Q15 324 20 333 L1.5 343.6 Z" fill="none" stroke="#aaa" stroke-width="1.2"/><rect x="-0.30000000000000004" y="321.7" width="3.6" height="3.6" fill="#666" stroke="#444" stroke-width="0.6"/><rect x="0.9" y="322.9" width="1.2" height="1.2" fill="#ccc"/><rect x="18.2" y="331.2" width="3.6" height="3.6" fill="#666" stroke="#444" stroke-width="0.6"/><rect x="19.4" y="332.4" width="1.2" height="1.2" fill="#ccc"/><rect x="-0.30000000000000004" y="341.8" width="3.6" height="3.6" fill="#666" stroke="#444" stroke-width="0.6"/><rect x="0.9" y="343.0" width="1.2" height="1.2" fill="#ccc"/>
<path d="M25 349 L25 342 L18 349 Z" fill="#6e6e6e"/>
<path d="M33 340 V326.5 H54" fill="none" stroke="#777" stroke-width="1.4"/><path d="M54 326.5 V340 H33" fill="none" stroke="#aaa" stroke-width="1.4"/><rect x="52.2" y="325.2" width="3.6" height="3.6" fill="#666" stroke="#444" stroke-width="0.6"/><rect x="53.4" y="326.4" width="1.2" height="1.2" fill="#ccc"/><rect x="31.7" y="338.2" width="3.6" height="3.6" fill="#666" stroke="#444" stroke-width="0.6"/><rect x="32.9" y="339.4" width="1.2" height="1.2" fill="#ccc"/>
<path d="M59 349 L59 342 L52 349 Z" fill="#6e6e6e"/>
<path d="M1 367 L5.5 358 H15 L20 367 L15 375.5 H5.5 Z" fill="none" stroke="#999" stroke-width="1.3"/><path d="M8.5 366.5 H18.5" stroke="#bbb"/><rect x="6.7" y="364.7" width="3.6" height="3.6" fill="#666" stroke="#444" stroke-width="0.6"/><rect x="7.9" y="365.9" width="1.2" height="1.2" fill="#ccc"/><rect x="16.7" y="364.7" width="3.6" height="3.6" fill="#666" stroke="#444" stroke-width="0.6"/><rect x="17.9" y="365.9" width="1.2" height="1.2" fill="#ccc"/>
<path d="M25 383 L25 376 L18 383 Z" fill="#6e6e6e"/>
<path d="M54 358 H44" fill="none" stroke="#ddd" stroke-width="1"/><path d="M33 358 H42 Q54 358 54 370 V377" fill="none" stroke="#333" stroke-width="1.8"/><rect x="31.2" y="356.2" width="3.6" height="3.6" fill="#666" stroke="#444" stroke-width="0.6"/><rect x="32.4" y="357.4" width="1.2" height="1.2" fill="#ccc"/><rect x="52.2" y="375.2" width="3.6" height="3.6" fill="#666" stroke="#444" stroke-width="0.6"/><rect x="53.4" y="376.4" width="1.2" height="1.2" fill="#ccc"/>
<path d="M59 383 L59 376 L52 383 Z" fill="#6e6e6e"/>
<defs><radialGradient id="gbs" cx="0.4" cy="0.35" r="0.7"><stop offset="0" stop-color="#b8c8f8"/><stop offset="1" stop-color="#3050c0"/></radialGradient></defs>
<path d="M5 391.5 L19 391.5 L13.5 411 L0.5 405 Z" fill="#6a8ae8" stroke="#334" stroke-width="1"/><path d="M12 391.5 L7 408 M3 398 L16.5 401" stroke="#2a3a90" stroke-width="0.9"/><rect x="3.2" y="389.7" width="3.6" height="3.6" fill="#666" stroke="#444" stroke-width="0.6"/><rect x="4.4" y="390.9" width="1.2" height="1.2" fill="#ccc"/><rect x="17.2" y="389.7" width="3.6" height="3.6" fill="#666" stroke="#444" stroke-width="0.6"/><rect x="18.4" y="390.9" width="1.2" height="1.2" fill="#ccc"/><rect x="11.7" y="409.2" width="3.6" height="3.6" fill="#666" stroke="#444" stroke-width="0.6"/><rect x="12.9" y="410.4" width="1.2" height="1.2" fill="#ccc"/>
<path d="M25 417 L25 410 L18 417 Z" fill="#6e6e6e"/>
<path d="M41 389.5 Q53 392 54 401 L46 412 Q47 403 34 395 Z" fill="#5a7ae0" stroke="#333" stroke-width="1"/><path d="M34 395 L41 389.5 L45 391 L38 397 Z" fill="#fff" stroke="#333" stroke-width="0.8"/><path d="M46 412 L54 406 V401 L47 405 Z" fill="#fff" stroke="#333" stroke-width="0.8"/>
<path d="M59 417 L59 410 L52 417 Z" fill="#6e6e6e"/>
<path d="M0 431 L9 425 L18 430 L10 436 Z" fill="#9ab0f2"/><path d="M0 431 L10 436 V447 L0 442 Z" fill="#4a70e0"/><path d="M10 436 L18 430 V442 L10 447 Z" fill="#3050c0"/>
<path d="M25 451 L25 444 L18 451 Z" fill="#6e6e6e"/>
<circle cx="39" cy="441" r="8" fill="url(#gbs)" stroke="#2a3a80" stroke-width="0.8"/><circle cx="48" cy="431" r="8" fill="url(#gbs)" stroke="#2a3a80" stroke-width="0.8"/><path d="M39 433 V449 M31 442 Q39 446 47 442 M48 423 V439" fill="none" stroke="#fff" stroke-width="0.5" opacity="0.6"/>
<path d="M59 451 L59 444 L52 451 Z" fill="#6e6e6e"/>
<ellipse cx="10" cy="459" rx="7" ry="3" fill="none" stroke="#888" stroke-width="1.2"/><path d="M-1 467 Q11 472 22 466 V478 Q11 484 -1 480 Z" fill="#4a70e0"/><ellipse cx="10" cy="475" rx="6" ry="2.6" fill="#7a98ee" stroke="#fff" stroke-width="1.3"/>
<path d="M25 485 L25 478 L18 485 Z" fill="#6e6e6e"/>
<path d="M38 458 L55 462 Q52 470 49 481 L31 475 Q36 467 38 458 Z" fill="#5a7ae0" stroke="#334" stroke-width="0.9"/><path d="M44 459.5 Q42 470 39 478 M36 466 L52 471" stroke="#2a3a90" stroke-width="0.9" fill="none"/>
<path d="M59 485 L59 478 L52 485 Z" fill="#6e6e6e"/>
<path d="M0 496 L5 493 L8 495 L11 493 L13 497 L11 500 L13 504 L8 506 L5 503 L0 505 Z" fill="#f0a020" stroke="#a06010" stroke-width="0.8"/><path d="M8 502 L13 500 L15 503 L19 502 L21 506 L19 509 L22 512 L17 515 L14 512 L10 514 L8 510 L10 507 Z" fill="#fff" stroke="#777" stroke-width="1"/>
<path d="M33 495 L36 509 L50 494 L43 509 L55 511 L31 519 Z" fill="#f39a18" stroke="#b85a00" stroke-width="0.8" stroke-linejoin="round"/><path d="M33 512 L43 509 L38 516 Z" fill="#ffd040"/>
<rect x="-1" y="537" width="12" height="4.5" fill="#fff" stroke="#555" stroke-width="1"/><path d="M10 526 H17.5 L10.5 541 Z" fill="#14287a"/><path d="M12 541 L15.5 537.5 L22 544 L18.5 547.5 Z" fill="#fff" stroke="#777" stroke-width="0.9"/>
<rect x="32" y="536.5" width="22" height="5" rx="1" fill="#fff" stroke="#666" stroke-width="1.1"/><path d="M44 526 H51.5 L44.5 541 Z" fill="#14287a"/>
<circle cx="10" cy="566" r="5" fill="#5a7ae8" stroke="#111" stroke-width="1.4"/><circle cx="5" cy="574" r="5" fill="#fff" stroke="#111" stroke-width="1.4"/><circle cx="14.5" cy="574" r="5" fill="#14287a" stroke="#111" stroke-width="1.4"/><circle cx="10" cy="566" r="4.2" fill="#5a7ae8"/>
<path d="M25 586 L25 579 L18 586 Z" fill="#6e6e6e"/>
<circle cx="43.5" cy="563.5" r="4.5" fill="#5a7ae8"/><circle cx="37" cy="575" r="4.5" fill="#fff" stroke="#888" stroke-width="1"/><circle cx="51" cy="575" r="4.5" fill="#14287a"/>
<path d="M3 597.5 Q14 598 16 611" fill="none" stroke="#333" stroke-width="1.6"/><circle cx="4" cy="597.5" r="1.5" fill="#fff" stroke="#444"/><path d="M16 611 V616" stroke="#444" stroke-width="1.8"/><circle cx="16" cy="611" r="1.5" fill="#fff" stroke="#444"/>
<path d="M31 593.5 H39" stroke="#666" stroke-width="1" stroke-dasharray="2 1"/><path d="M40 593.5 L54.5 608" stroke="#bbb" stroke-width="0.8" stroke-dasharray="1 1"/><path d="M31 600 Q47 600 49 616" fill="none" stroke="#555" stroke-width="2"/><rect x="38.5" y="592.0" width="3.0" height="3.0" fill="#666" stroke="#444" stroke-width="0.6"/><rect x="39.4" y="592.9" width="1.2" height="1.2" fill="#ccc"/><rect x="53.0" y="606.5" width="3.0" height="3.0" fill="#666" stroke="#444" stroke-width="0.6"/><rect x="53.9" y="607.4" width="1.2" height="1.2" fill="#ccc"/>
<path d="M59 619 L59 612 L52 619 Z" fill="#6e6e6e"/>
<path d="M0 627 H18 V633 H12.5 V648 H6 V633 H0 Z" fill="#5a7ae8" stroke="#2a3a90" stroke-width="1"/><path d="M0 627 L2 625 H20 L18 627 M18 633 L20 631 V625" fill="#8aa0f0" stroke="#2a3a90" stroke-width="0.8"/>
<rect x="33" y="641" width="7" height="7" fill="#f4f4f4" stroke="#555" stroke-width="1.1"/><rect x="48" y="627" width="7" height="7" fill="#6a8aee" stroke="#334" stroke-width="1.1"/><path d="M40 641 L47 635 M44 635 H47 V638" fill="none" stroke="#333" stroke-width="1"/>
<path d="M59 653 L59 646 L52 653 Z" fill="#6e6e6e"/>
<rect x="0" y="660" width="6" height="6" fill="#6a8aee" stroke="#334" stroke-width="0.9"/><rect x="0" y="675" width="6" height="6" fill="#f4f4f4" stroke="#555" stroke-width="0.9"/><rect x="10" y="668" width="6" height="6" fill="#6a8aee" stroke="#334" stroke-width="0.9"/><rect x="14" y="664" width="6.5" height="6.5" fill="#6a8aee" stroke="#334" stroke-width="0.9"/><rect x="14" y="677" width="6.5" height="6.5" fill="#6a8aee" stroke="#334" stroke-width="0.9"/>
<rect x="30" y="662" width="7" height="17" fill="#e8e8e8" stroke="#555" stroke-width="1"/><path d="M41 681 L53 669 L56 672 L44 684 Z" fill="#5a7ae8" stroke="#2a3a90" stroke-width="0.9"/><path d="M37 662 Q45 661 48 669 M46 667 L48 669 L49 666" fill="none" stroke="#333" stroke-width="0.9"/>
<path d="M0 699 L10 693 L21 698 L11 704 Z" fill="#9ab0f2"/><path d="M0 699 L11 704 V716 L0 711 Z" fill="#4a70e0"/><path d="M11 704 L21 698 V710 L11 716 Z" fill="#3050c0"/><path d="M7 711 L14 708 L15 715 L8 718 Z" fill="#fff" stroke="#334" stroke-width="0.6"/>
<path d="M25 721 L25 714 L18 721 Z" fill="#6e6e6e"/>
<path d="M31 712 L36 707 H57 L52 712 Z" fill="#5a7ae8" stroke="#2a3a90" stroke-width="0.8"/><path d="M37 709 V698 M44 709 V697 M51 709 V698" stroke="#fff" stroke-width="2.2"/><path d="M35 700 L37 697 L39 700 M42 699 L44 696 L46 699 M49 700 L51 697 L53 700" fill="none" stroke="#fff" stroke-width="1.3"/>
<path d="M59 721 L59 714 L52 721 Z" fill="#6e6e6e"/>
<rect x="0" y="730" width="4.5" height="4.5" fill="#6a8aee" stroke="#334" stroke-width="0.8"/><rect x="0" y="738" width="4.5" height="4.5" fill="#6a8aee" stroke="#334" stroke-width="0.8"/><rect x="0" y="746" width="4.5" height="4.5" fill="#6a8aee" stroke="#334" stroke-width="0.8"/><rect x="8" y="730" width="4.5" height="4.5" fill="#6a8aee" stroke="#334" stroke-width="0.8"/><rect x="8" y="738" width="4.5" height="4.5" fill="#6a8aee" stroke="#334" stroke-width="0.8"/><rect x="8" y="746" width="4.5" height="4.5" fill="#6a8aee" stroke="#334" stroke-width="0.8"/><rect x="16" y="730" width="4.5" height="4.5" fill="#6a8aee" stroke="#334" stroke-width="0.8"/><rect x="16" y="738" width="4.5" height="4.5" fill="#6a8aee" stroke="#334" stroke-width="0.8"/><rect x="16" y="746" width="4.5" height="4.5" fill="#6a8aee" stroke="#334" stroke-width="0.8"/>
<path d="M25 755 L25 748 L18 755 Z" fill="#6e6e6e"/>
<rect x="39" y="728" width="10" height="6" fill="#fff" stroke="#555" stroke-width="1"/><rect x="41" y="736" width="6" height="5" fill="#fff" stroke="#555" stroke-width="1"/><rect x="40" y="743" width="9" height="8" fill="#fff" stroke="#555" stroke-width="1"/><path d="M44 726 V753" stroke="#d03030" stroke-width="1.2" stroke-dasharray="2 1"/>
<path d="M59 755 L59 748 L52 755 Z" fill="#6e6e6e"/>
<path d="M0 766 L7 763 L9 779 L2 781 Z" fill="#eee" stroke="#777" stroke-width="0.8"/><path d="M7 764 L12 762 L20 768 L14 786 L6 783 Z" fill="#5a7ae8" stroke="#2a3a90" stroke-width="0.9"/>
<path d="M25 789 L25 782 L18 789 Z" fill="#6e6e6e"/>
<path d="M33 775 L38 782 L54 762" fill="none" stroke="#111" stroke-width="2.6" stroke-linejoin="round"/>
<path d="M59 789 L59 782 L52 789 Z" fill="#6e6e6e"/>
<path d="M0 801 L6 797 L13 800 L7 804 Z" fill="#eee" stroke="#888" stroke-width="0.6"/><path d="M0 801 L7 804 V813 L0 810 Z" fill="#ccc" stroke="#888" stroke-width="0.6"/><path d="M14 799 L22 813 Q17 817 10 813 Z" fill="#d8d8d8" stroke="#888" stroke-width="0.8"/>
<path d="M25 823 L25 816 L18 823 Z" fill="#6e6e6e"/>
<path d="M44 799 L53 811 L43 819 L34 812 Z" fill="#f2c84a" stroke="#8a6010" stroke-width="0.8"/><path d="M44 799 L43 819 L53 811 Z" fill="#d8a828"/><path d="M46 795 L52 792 H57 V797 H52 Z" fill="#eee" stroke="#555" stroke-width="0.8"/>
<path d="M59 823 L59 816 L52 823 Z" fill="#6e6e6e"/>
<polygon points="847,570.3 862.1,569.1 1082.4,646.5 1082.6,668.6 1094.6,673.9 1091.5,811.3 850.5,713.5" fill="url(#gface)" stroke="#222" stroke-width="1.35" stroke-linejoin="round"/>
<polyline points="963.4,605.2 965.8,758.9" fill="none" stroke="#333" stroke-width="1.0"/>
<polyline points="847,572 1082.2,652" fill="none" stroke="#555" stroke-width="0.8"/>
<polygon points="862.1,569.1 912.2,548.8 1131.2,622.3 1082.4,646.5" fill="#77787a" stroke="#222" stroke-width="1.35" stroke-linejoin="round"/>
<polyline points="905.2,551.6 1089.2,644.8" fill="none" stroke="#333" stroke-width="0.8"/>
<polyline points="963.4,602.9 1017,585.4" fill="none" stroke="#333" stroke-width="0.8"/>
<polygon points="1082.4,646.5 1131.2,622.3 1130.6,645 1082.6,668.6" fill="url(#glight)" stroke="#222" stroke-width="1.35" stroke-linejoin="round"/>
<polyline points="1107.6,635.3 1107.6,655.3" fill="none" stroke="#333" stroke-width="0.9"/>
<polyline points="1083.3,657.3 1130.6,634" fill="none" stroke="#333" stroke-width="0.9"/>
<polygon points="1082.6,668.6 1130.6,645 1131.6,635.6 1152.5,643 1094.6,673.9" fill="#77787a" stroke="#222" stroke-width="1.35" stroke-linejoin="round"/>
<polyline points="1113.3,653.3 1122.6,658" fill="none" stroke="#333" stroke-width="0.9"/>
<polygon points="1094.6,673.9 1152.5,643 1148.6,777.5 1091.5,811.3" fill="url(#glight)" stroke="#222" stroke-width="1.35" stroke-linejoin="round"/>
<polyline points="1124.1,658.8 1120.6,792.7" fill="none" stroke="#333" stroke-width="1.0"/>
<polyline points="1093.8,742.6 1149.7,712.3" fill="none" stroke="#333" stroke-width="1.0"/>
<polygon points="722.9,581.1 772.7,607.3 779.7,738.4 731.6,708.6" fill="url(#gface)" stroke="#222" stroke-width="1.35" stroke-linejoin="round"/>
<polyline points="747.3,594.2 755.2,722.6" fill="none" stroke="#333" stroke-width="1.0"/>
<polyline points="728.1,646.6 775.3,673.7" fill="none" stroke="#333" stroke-width="1.0"/>
<polygon points="772.7,607.3 784,603.8 784,582.8 819.9,571.5 821.5,571.8 814,421.1 840.2,415.2 846.1,569.8 847,570.3 850.5,713.5 851.3,713 779.7,738.4" fill="url(#glight)" stroke="#222" stroke-width="1.35" stroke-linejoin="round"/>
<polyline points="808.5,576.7 816.4,724.4" fill="none" stroke="#333" stroke-width="1.0"/>
<polyline points="784,588 846,570" fill="none" stroke="#333" stroke-width="0.8"/>
<polygon points="723.2,580.8 742.5,575.3 743.6,581.1 783.8,603.5 772.2,607.3" fill="#77787a" stroke="#222" stroke-width="1.35" stroke-linejoin="round"/>
<polyline points="747.7,594 756.4,591" fill="none" stroke="#333" stroke-width="0.9"/>
<polygon points="742.5,561 783.2,582.9 783.8,603.5 743.6,581.1" fill="#9d9d9b" stroke="#222" stroke-width="1.35" stroke-linejoin="round"/>
<polyline points="763.1,572 763.7,590.4" fill="none" stroke="#333" stroke-width="0.9"/>
<polyline points="743.6,572.4 783.2,592.2" fill="none" stroke="#333" stroke-width="0.9"/>
<polygon points="742.5,561 779.7,550.2 819.9,571.5 783.2,582.9" fill="#77787a" stroke="#222" stroke-width="1.35" stroke-linejoin="round"/>
<polyline points="762.3,555.5 799.5,576.4" fill="none" stroke="#333" stroke-width="1.0"/>
<polyline points="763.4,571.8 797.2,560.7" fill="none" stroke="#333" stroke-width="1.0"/>
<polygon points="764.4,421.1 791.3,432.8 790.5,411.3 814,421.1 821.5,571.8 779.7,550.1 772.9,551.1" fill="url(#gface)" stroke="#222" stroke-width="1.35" stroke-linejoin="round"/>
<polyline points="790.9,433 796.2,555.8" fill="none" stroke="#333" stroke-width="1.0"/>
<polyline points="768.2,485.2 818.1,508.5" fill="none" stroke="#333" stroke-width="1.0"/>
<polygon points="840.2,415.2 846,416 846,437.5 856.6,441.8 862.1,569.1 846.1,569.8" fill="url(#gface)" stroke="#222" stroke-width="1.35" stroke-linejoin="round"/>
<polygon points="856.6,441.8 919.8,419.5 922,551.1 912.2,548.8 862.1,569.1" fill="url(#glight)" stroke="#222" stroke-width="1.35" stroke-linejoin="round"/>
<polyline points="889.3,430 892.7,555.8" fill="none" stroke="#333" stroke-width="1.0"/>
<polyline points="860.7,516.5 921.3,493.2" fill="none" stroke="#333" stroke-width="1.0"/>
<polygon points="846,437.9 897.9,420.5 898.9,414 919,419.6 856.8,441.6" fill="#77787a" stroke="#222" stroke-width="1.35" stroke-linejoin="round"/>
<polyline points="869.4,431 875,433.5" fill="none" stroke="#333" stroke-width="0.9"/>
<polygon points="846,416.5 897.6,399 897.9,420.5 846,437.9" fill="url(#glight)" stroke="#222" stroke-width="1.35" stroke-linejoin="round"/>
<polyline points="872.4,409 872.9,427.9" fill="none" stroke="#333" stroke-width="0.9"/>
<polyline points="846.5,426.7 897.4,410.5" fill="none" stroke="#333" stroke-width="0.9"/>
<polygon points="785.1,400 801.9,407.8 790.5,411.3 790.5,423.8 785.1,421.9" fill="#9d9d9b" stroke="#222" stroke-width="1.35" stroke-linejoin="round"/>
<polygon points="764.4,421.1 785.1,415.6 785.1,421.9 790.5,423.8 791.3,432.8" fill="#77787a" stroke="#222" stroke-width="1.35" stroke-linejoin="round"/>
<polygon points="785.1,400 848.4,384.8 898,398.4 846,416 840.2,415.2 814,421.1 790.5,411.3 801.9,407.8" fill="#77787a" stroke="#222" stroke-width="1.35" stroke-linejoin="round"/>
<polyline points="817.5,392.6 859.7,411.3" fill="none" stroke="#2a2a2a" stroke-width="1.1"/>
<polyline points="798.8,411.7 835,403 873.8,393.75" fill="none" stroke="#222" stroke-width="1.2"/>
<path d="M1017 582 L1017 601 L1021.5 597 L1025 604.5 L1028 603 L1024.5 596 L1030.5 595.5 Z" fill="#fff" stroke="#111" stroke-width="1.1" stroke-linejoin="round"/>
<path d="M109.2 1057.5 V1090.7 L137.2 1101.2 M109.2 1090.7 L132.5 1078.4" fill="none" stroke="#a0a0a0" stroke-width="1.2"/>
<g transform="translate(2006,232)"><path d="M0.5 3.5 L19.5 8 L19 18 L8.5 23.5 L0 14 Z" fill="#22368a"/><path d="M0.5 3.5 L19.5 8 L19 14.5 L8.5 19.5 L0.5 10.5 Z" fill="#eef0ff"/><path d="M0.5 3.5 L19.5 8 L19 11 L8.5 15.5 L0.5 8.5 Z" fill="#f0784a"/><path d="M8.5 15.5 L19 11 L19 8" fill="none" stroke="#c02010" stroke-width="1.6"/><path d="M0.5 3.5 L19.5 8" stroke="#803020" stroke-width="1"/></g>
<g transform="translate(2055,234)"><ellipse cx="11" cy="19.5" rx="6" ry="1.8" fill="#bbb"/><circle cx="9" cy="12" r="8" fill="url(#gblue)"/><path d="M12 5 L15 2.5 L19 2.5" fill="none" stroke="#555" stroke-width="2.2"/><path d="M12.5 5 L15 3 L18.5 3" fill="none" stroke="#eee" stroke-width="1"/><rect x="18.5" y="1" width="2" height="4" fill="#222"/></g>
<g transform="translate(2104,234)"><path d="M2 20 L14 4 L18 7 L6 22 Z" fill="#eee" stroke="#555"/><path d="M12 7 L15 3 L19 6 L16 10 Z" fill="#e86838"/></g>
<g transform="translate(2153,236)"><path d="M1 4 H7 L9 6 H17 V9 H4 Z" fill="#e6c440" stroke="#5a4a10"/><path d="M1 17 L4 9 H20 L17 17 Z" fill="url(#gyel)" stroke="#5a4a10"/></g>
<g transform="translate(2202,235)"><rect x="1" y="1" width="19" height="18" fill="#c8d8f0" stroke="#555" stroke-width="1.2"/><rect x="1" y="1" width="19" height="3" fill="#777"/><circle cx="10.5" cy="11.5" r="5.5" fill="#4a70d8"/><text x="10.5" y="15" font-size="9" font-weight="bold" fill="#fff" text-anchor="middle" font-family="Liberation Sans">?</text></g>
<g transform="translate(2252,234)"><path d="M10 1 Q17 2 17 12 L19 18 H1 L3 12 Q3 2 10 1 Z" fill="#2a58d8" stroke="#1a2a70"/><circle cx="10" cy="20" r="2" fill="#1a2a70"/></g>
<g transform="translate(1958,270)"><path d="M1 1 H9 L13 5 V18 H1 Z" fill="url(#gpaper)" stroke="#444" stroke-width="1.3"/></g>
<g transform="translate(1982,270)"><path d="M1 1 H7 L10 4 V13 H1 Z" fill="#f4f4f4" stroke="#444" stroke-width="1.2"/><path d="M5 6 H11 L14 9 V19 H5 Z" fill="url(#gpaper)" stroke="#444" stroke-width="1.2"/></g>
<path d="M2009 273 L2022 287 M2022 273 L2009 287" stroke="#d42020" stroke-width="3"/>
<path d="M2034 285 L2042 275 L2050 285 Z" fill="#a8a8a8"/>
<path d="M2059 274 L2075 274 L2067 285 Z" fill="#5a7ae0" stroke="#2a40a0"/>
<path d="M2097 272 L2097 287 L2088 279.5 Z" fill="#a0a0a0"/>
<path d="M2110 272 H2126 L2120 280 V287 L2116 288 V280 Z" fill="#3a60d0" stroke="#1a2a80"/>
<path d="M2128 289 L2128 282 L2121 289 Z" fill="#6e6e6e"/>
<path d="M2138 272 H2146 L2150 276 V287 H2138 Z" fill="#ccc" stroke="#aaa"/>
<path d="M2161 287 L2172 276" stroke="#1a2a70" stroke-width="3.5"/><path d="M2166 273 L2174 271 L2180 278 L2176 281 L2170 277 Z" fill="#222"/>
<path d="M2178 289 L2178 282 L2171 289 Z" fill="#6e6e6e"/>
<circle cx="2195" cy="279.5" r="8.5" fill="url(#ghelp)"/><text x="2195" y="285" font-size="13" font-weight="bold" fill="#fff" text-anchor="middle" font-family="Liberation Serif">?</text>
<path d="M2188.5 335 L2194 340.5 L2205 330" fill="none" stroke="#2a2d3a" stroke-width="1.7"/>
<rect x="2249" y="328" width="14" height="13" fill="#000" stroke="#fff" stroke-width="1"/>
<circle cx="2278" cy="334" r="8.5" fill="#fff"/>
<path d="M1953 352 L1958 357 L1963 352" fill="none" stroke="#333" stroke-width="1.8"/>
<path d="M1975 372 L1980 377 L1975 382" fill="none" stroke="#888" stroke-width="1.3"/>
<path d="M1975 394 L1980 399 L1975 404" fill="none" stroke="#888" stroke-width="1.3"/>
<path d="M2216 348.5 Q2221 348.5 2221 353.5 Q2221 356 2218.5 358.5 V361.5 H2213.5 V358.5 Q2211 356 2211 353.5 Q2211 348.5 2216 348.5 Z" fill="#f8e878" stroke="#a08818" stroke-width="1"/><path d="M2214 360.5 H2218" stroke="#c89a20" stroke-width="1.2"/>
<rect x="2230.5" y="352.5" width="8.5" height="9" rx="1" fill="#f2dc50" stroke="#6a6040" stroke-width="1"/><path d="M2237 352.5 V350.5 Q2237 347 2240 347 Q2243 347 2243 350.5 V351.5" fill="none" stroke="#444" stroke-width="1.3"/>
<rect x="2249" y="349" width="14" height="14" fill="#000"/>
<circle cx="2278" cy="356" r="7.5" fill="#f8f8f8"/>
<path d="M2216 370.5 Q2221 370.5 2221 375.5 Q2221 378 2218.5 380.5 V383.5 H2213.5 V380.5 Q2211 378 2211 375.5 Q2211 370.5 2216 370.5 Z" fill="#f8e878" stroke="#a08818" stroke-width="1"/><path d="M2214 382.5 H2218" stroke="#c89a20" stroke-width="1.2"/>
<rect x="2230.5" y="374.5" width="8.5" height="9" rx="1" fill="#f2dc50" stroke="#6a6040" stroke-width="1"/><path d="M2237 374.5 V372.5 Q2237 369 2240 369 Q2243 369 2243 372.5 V373.5" fill="none" stroke="#444" stroke-width="1.3"/>
<rect x="2249" y="371" width="14" height="14" fill="#555" stroke="#333"/><rect x="2250" y="372" width="6" height="6" fill="#bbb"/><rect x="2256" y="378" width="6" height="6" fill="#bbb"/>
<circle cx="2278" cy="378" r="7.5" fill="#f8f8f8"/>
<path d="M2216 392.5 Q2221 392.5 2221 397.5 Q2221 400 2218.5 402.5 V405.5 H2213.5 V402.5 Q2211 400 2211 397.5 Q2211 392.5 2216 392.5 Z" fill="#f8e878" stroke="#a08818" stroke-width="1"/><path d="M2214 404.5 H2218" stroke="#c89a20" stroke-width="1.2"/>
<rect x="2230.5" y="396.5" width="8.5" height="9" rx="1" fill="#f2dc50" stroke="#6a6040" stroke-width="1"/><path d="M2237 396.5 V394.5 Q2237 391 2240 391 Q2243 391 2243 394.5 V395.5" fill="none" stroke="#444" stroke-width="1.3"/>
<rect x="2249" y="393" width="14" height="14" fill="#000"/>
<circle cx="2278" cy="400" r="7.5" fill="#f8f8f8"/>
<path d="M1956 706 V694 L1965 689 M1957 696 L1965 701" fill="none" stroke="#333" stroke-width="4" stroke-linecap="round" stroke-linejoin="round"/>
<circle cx="2302" cy="697" r="6" fill="none" stroke="#ccc" stroke-width="1.5"/>
<circle cx="2302" cy="245" r="6" fill="none" stroke="#ccc" stroke-width="1.5"/>
</svg>
</body></html>
